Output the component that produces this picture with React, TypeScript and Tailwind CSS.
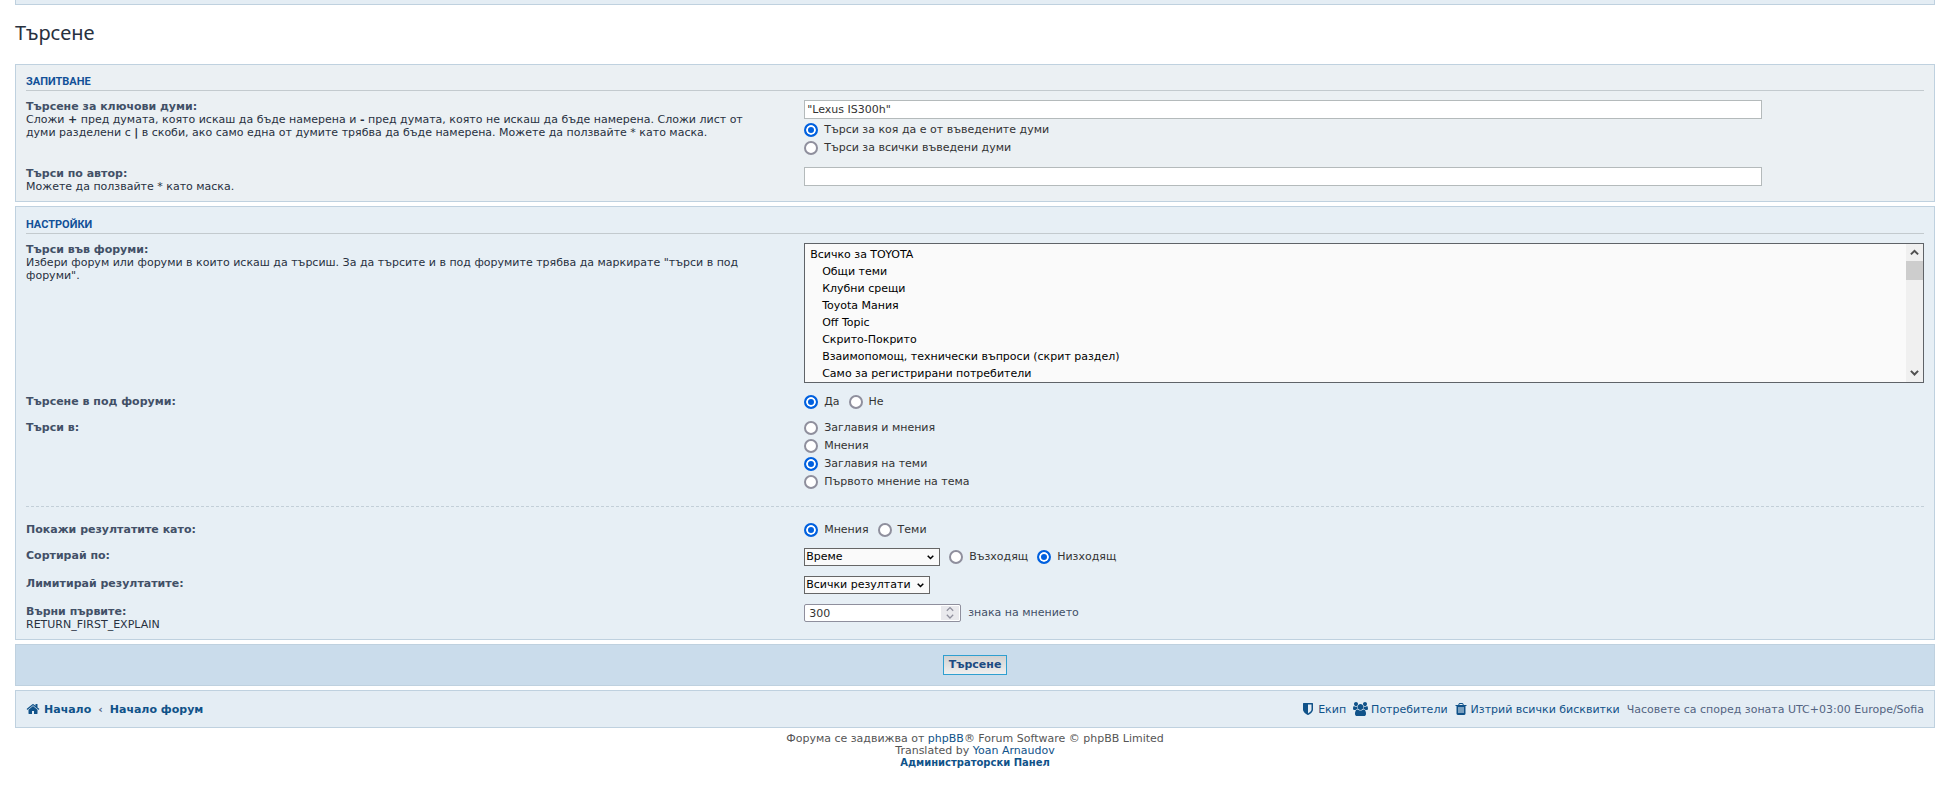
import React, { useState } from "react";

const forums = [
  { id: "1", name: "Всичко за TOYOTA", nested: false },
  { id: "2", name: "Общи теми", nested: true },
  { id: "3", name: "Клубни срещи", nested: true },
  { id: "4", name: "Toyota Мания", nested: true },
  { id: "5", name: "Off Topic", nested: true },
  { id: "6", name: "Скрито-Покрито", nested: true },
  { id: "7", name: "Взаимопомощ, технически въпроси (скрит раздел)", nested: true },
  { id: "8", name: "Само за регистрирани потребители", nested: true },
];

const icons = {
  home: {
    box: "0 0 1792 1792",
    d: "M1472 992v480q0 26-19 45t-45 19h-384v-384h-256v384h-384q-26 0-45-19t-19-45v-480q0-1 .5-3t.5-3l575-474 575 474q1 2 1 6zm223-69l-62 74q-8 9-21 11h-3q-13 0-21-7l-692-577-692 577q-12 8-24 7-13-2-21-11l-62-74q-8-10-7-23.5t11-21.5l719-599q32-26 76-26t76 26l244 204v-195q0-14 9-23t23-9h192q14 0 23 9t9 23v408l219 182q10 8 11 21.5t-7 23.5z",
  },
  shield: {
    box: "256 0 1280 1792",
    d: "M1344 960v-640h-448v1137q119-63 213-137 235-184 235-360zm192-768v768q0 86-33.5 170.5t-83 150-118 127.5-126.5 103-121 77.5-89.5 49.5-42.5 20q-12 6-26 6t-26-6q-16-7-42.5-20t-89.5-49.5-121-77.5-126.5-103-118-127.5-83-150-33.5-170.5v-768q0-26 19-45t45-19h1152q26 0 45 19t19 45z",
  },
  group: {
    box: "-64 0 1920 1792",
    d: "M529 896q-162 5-265 128h-134q-82 0-138-40.5t-56-118.5q0-353 124-353 6 0 43.5 21t97.5 42.5 119 21.5q67 0 133-23-5 37-5 66 0 139 81 256zm1071 637q0 120-73 189.5t-194 69.5h-874q-121 0-194-69.5t-73-189.5q0-53 3.5-103.5t14-109 26.5-108.5 43-97.5 62-81 85.5-53.5 111.5-20q10 0 43 21.5t73 48 107 48 135 21.5 135-21.5 107-48 73-48 43-21.5q61 0 111.5 20t85.5 53.5 62 81 43 97.5 26.5 108.5 14 109 3.5 103.5zm-1024-1277q0 106-75 181t-181 75-181-75-75-181 75-181 181-75 181 75 75 181zm704 384q0 159-112.5 271.5t-271.5 112.5-271.5-112.5-112.5-271.5 112.5-271.5 271.5-112.5 271.5 112.5 112.5 271.5zm576 225q0 78-56 118.5t-138 40.5h-134q-103-123-265-128 81-117 81-256 0-29-5-66 66 23 133 23 59 0 119-21.5t97.5-42.5 43.5-21q124 0 124 353zm-128-609q0 106-75 181t-181 75-181-75-75-181 75-181 181-75 181 75 75 181z",
  },
  trash: {
    box: "192 0 1408 1792",
    d: "M704 1376v-704q0-14-9-23t-23-9h-64q-14 0-23 9t-9 23v704q0 14 9 23t23 9h64q14 0 23-9t9-23zm256 0v-704q0-14-9-23t-23-9h-64q-14 0-23 9t-9 23v704q0 14 9 23t23 9h64q14 0 23-9t9-23zm256 0v-704q0-14-9-23t-23-9h-64q-14 0-23 9t-9 23v704q0 14 9 23t23 9h64q14 0 23-9t9-23zm-544-992h448l-48-117q-7-9-17-11h-317q-10 2-17 11zm928 32v64q0 14-9 23t-23 9h-96v948q0 83-47 143.5t-113 60.5h-832q-66 0-113-58.5t-47-141.5v-952h-96q-14 0-23-9t-9-23v-64q0-14 9-23t23-9h309l70-167q15-37 54-63t79-26h320q40 0 79 26t54 63l70 167h309q14 0 23 9t9 23z",
  },
};

const Icon = ({ name, className }: { name: keyof typeof icons; className: string }) => (
  <svg viewBox={icons[name].box} className={`shrink-0 fill-current ${className}`} aria-hidden="true">
    <path d={icons[name].d} />
  </svg>
);

interface ChevronProps {
  up?: boolean;
  thin?: boolean;
  className: string;
}

const Chevron = ({ up = false, thin = false, className }: ChevronProps) => (
  <svg viewBox="0 0 10 7" className={`fill-none stroke-current ${className}`} aria-hidden="true">
    <path d={up ? "M1 6l4-4 4 4" : "M1 1l4 4 4-4"} strokeWidth={thin ? "1.6" : "2.2"} />
  </svg>
);

interface RadioProps {
  name: string;
  label: string;
  defaultChecked?: boolean;
}

const Radio = ({ name, label, defaultChecked }: RadioProps) => (
  <label className="flex h-[18px] items-center gap-[6px] whitespace-nowrap text-[#333333]">
    <input
      type="radio"
      name={name}
      defaultChecked={defaultChecked}
      className="size-3.5 shrink-0 appearance-none rounded-full border-2 border-[#8f8f9d] bg-white checked:border-[#0060df] checked:bg-[#0060df] checked:shadow-[inset_0_0_0_2px_white]"
    />
    <span className="pb-[2px]">{label}</span>
  </label>
);

const Legend = ({ children }: { children: React.ReactNode }) => (
  <h3 className="mb-[7px] border-b border-[#c3cace] pb-px font-['Roboto',sans-serif] text-[11px] leading-[14px] font-bold text-[#115098] uppercase">
    {children}
  </h3>
);

interface RowProps {
  title: string;
  htmlFor?: string;
  help?: React.ReactNode;
  children: React.ReactNode;
}

const Row = ({ title, htmlFor, help, children }: RowProps) => (
  <div className="grid grid-cols-[41%_1fr]">
    <div className="pt-[2px] pr-8">
      {htmlFor ? (
        <label htmlFor={htmlFor} className="block font-bold text-[#425067]">
          {title}
        </label>
      ) : (
        <p className="font-bold text-[#425067]">{title}</p>
      )}
      {help && <p>{help}</p>}
    </div>
    <div className="min-w-0">{children}</div>
  </div>
);

const Dropdown = ({ id, options, className }: { id: string; options: string[]; className: string }) => (
  <div className={`relative ${className}`}>
    <select
      id={id}
      className="block h-[18px] w-full appearance-none border border-[#666666] bg-[#fafafa] pl-px text-[11px] leading-[16px] text-black"
    >
      {options.map((option) => (
        <option key={option}>{option}</option>
      ))}
    </select>
    <Chevron className="pointer-events-none absolute top-[7px] right-[6px] w-[7px] text-black" />
  </div>
);

const inputClass =
  "block h-[19px] w-[calc(85%+6px)] border border-[#b4babb] bg-white px-[2px] text-[11px] text-[#333333]";

const App = () => {
  const [keywords, setKeywords] = useState('"Lexus IS300h"');
  const [chars, setChars] = useState(300);

  return (
    <div className="min-h-screen bg-white pr-[9px] pl-[15px] font-['DejaVu_Sans',Verdana,sans-serif] text-[11px] leading-[13px] text-[#28313f]">
      {/* Bottom of the header navigation */}
      <div className="h-[5px] border border-t-0 border-[#bfd1df] bg-[#e4edf4]" />

      <h2 className="pt-[14px] pb-[17px] font-['Noto_Sans',sans-serif] text-[20px] leading-7 text-[#28313f]">
        Търсене
      </h2>

      <form onSubmit={(e) => e.preventDefault()}>
        {/* Query */}
        <section className="mb-1 border border-[#bfd1df] bg-[#ebf0f3] px-[10px] pt-[10px] pb-2">
          <Legend>Запитване</Legend>
          <div className="flex flex-col gap-2">
            <Row
              title="Търсене за ключови думи:"
              htmlFor="keywords"
              help={
                <>
                  Сложи <strong>+</strong> пред думата, която искаш да бъде намерена и <strong>-</strong> пред
                  думата, която не искаш да бъде намерена. Сложи лист от думи разделени с <strong>|</strong> в
                  скоби, ако само една от думите трябва да бъде намерена. Можете да ползвайте * като маска.
                </>
              }
            >
              <div className="pt-[2px]">
                <input
                  id="keywords"
                  type="text"
                  value={keywords}
                  onChange={(e) => setKeywords(e.target.value)}
                  className={inputClass}
                />
                <div className="flex flex-col pt-[2px]">
                  <Radio name="terms" label="Търси за коя да е от въведените думи" defaultChecked />
                  <Radio name="terms" label="Търси за всички въведени думи" />
                </div>
              </div>
            </Row>
            <Row title="Търси по автор:" htmlFor="author" help="Можете да ползвайте * като маска.">
              <div className="pt-[2px]">
                <input id="author" type="text" className={inputClass} />
              </div>
            </Row>
          </div>
        </section>

        {/* Options */}
        <section className="mb-1 border border-[#bfd1df] bg-[#e7eff5] px-[10px] pt-[11px] pb-2">
          <Legend>Настройки</Legend>
          <div className="flex flex-col gap-2">
            <Row
              title="Търси във форуми:"
              htmlFor="forums"
              help={'Избери форум или форуми в които искаш да търсиш. За да търсите и в под форумите трябва да маркирате "търси в под форуми".'}
            >
              <div className="relative my-[2px] border border-[#5f6368] bg-[#fafafa]">
                <select
                  id="forums"
                  multiple
                  size={8}
                  className="block h-[138px] w-full appearance-none overflow-y-auto bg-transparent pt-[2px] text-[11px] leading-[13px] text-black [scrollbar-width:none]"
                >
                  {forums.map((forum) => (
                    <option
                      key={forum.id}
                      value={forum.id}
                      className={forum.nested ? "h-[17px] py-[2px] pr-5 pl-[17px]" : "h-[17px] py-[2px] pr-5 pl-[5px]"}
                    >
                      {forum.name}
                    </option>
                  ))}
                </select>
                {/* Scrollbar */}
                <div className="pointer-events-none absolute inset-y-0 right-0 flex w-[17px] flex-col items-center bg-[#f0f0f0] text-[#505050]">
                  <div className="flex h-[17px] items-center">
                    <Chevron up className="w-[9px]" />
                  </div>
                  <div className="h-[19px] w-full bg-[#cdcdcd]" />
                  <div className="mt-auto flex h-[17px] items-center">
                    <Chevron className="w-[9px]" />
                  </div>
                </div>
              </div>
            </Row>
            <Row title="Търсене в под форуми:">
              <div className="flex gap-[9px]">
                <Radio name="subforums" label="Да" defaultChecked />
                <Radio name="subforums" label="Не" />
              </div>
            </Row>
            <Row title="Търси в:">
              <Radio name="fields" label="Заглавия и мнения" />
              <Radio name="fields" label="Мнения" />
              <Radio name="fields" label="Заглавия на теми" defaultChecked />
              <Radio name="fields" label="Първото мнение на тема" />
            </Row>
            <hr className="mt-[7px] mb-[6px] border-t border-dashed border-[#c3cfd8]" />
            <Row title="Покажи резултатите като:">
              <div className="flex gap-[9px]">
                <Radio name="results" label="Мнения" defaultChecked />
                <Radio name="results" label="Теми" />
              </div>
            </Row>
            <Row title="Сортирай по:" htmlFor="sort">
              <div className="flex h-5 items-center gap-[9px]">
                <Dropdown id="sort" options={["Време", "Автор", "Форум", "Заглавие"]} className="w-[136px]" />
                <Radio name="direction" label="Възходящ" />
                <Radio name="direction" label="Низходящ" defaultChecked />
              </div>
            </Row>
            <Row title="Лимитирай резултатите:" htmlFor="limit">
              <div className="flex h-5 items-center">
                <Dropdown id="limit" options={["Всички резултати", "1 ден", "7 дни"]} className="w-[126px]" />
              </div>
            </Row>
            <Row title="Върни първите:" htmlFor="chars" help="RETURN_FIRST_EXPLAIN">
              <div className="flex h-5 items-center gap-[7px]">
                <div className="relative w-[157px]">
                  <input
                    id="chars"
                    type="number"
                    value={chars}
                    onChange={(e) => setChars(Number(e.target.value))}
                    className="block h-[18px] w-full appearance-none rounded-[2px] border border-[#8f8f9d] bg-white pl-1 text-[11px] text-[#333333] [-moz-appearance:textfield] [&::-webkit-inner-spin-button]:appearance-none"
                  />
                  <div className="pointer-events-none absolute inset-y-[2px] right-[2px] flex w-[18px] flex-col items-center justify-center gap-[2px] bg-[#e9e9ed] text-[#8f8f9d]">
                    <Chevron up thin className="w-[8px]" />
                    <Chevron thin className="w-[8px]" />
                  </div>
                </div>
                <label htmlFor="chars" className="pb-[2px] text-[#425067]">
                  знака на мнението
                </label>
              </div>
            </Row>
          </div>
        </section>

        {/* Submit */}
        <div className="mb-1 flex justify-center border border-[#bfd1df] bg-[#cadceb] py-[10px]">
          <button
            type="submit"
            className="h-5 border border-[#2f9fd0] bg-linear-to-b from-[#d2d2d2] to-[#efefef] px-[5px] text-[11px] leading-[18px] font-bold text-[#1c4a82]"
          >
            Търсене
          </button>
        </div>
      </form>

      {/* Footer navigation */}
      <nav className="flex h-[38px] items-center justify-between border border-[#bfd1df] bg-[#e4edf4] px-[10px] text-[#536482]">
        <div className="flex items-center gap-[7px] font-bold">
          <a href="#" className="flex items-center gap-1 text-[#105289]">
            <Icon name="home" className="size-[14px]" />
            Начало
          </a>
          <span>‹</span>
          <a href="#" className="text-[#105289]">
            Начало форум
          </a>
        </div>
        <div className="flex items-center gap-[7px] whitespace-nowrap">
          <a href="#" className="flex items-center gap-1 text-[#105289]">
            <Icon name="shield" className="h-[14px] w-3" />
            Екип
          </a>
          <a href="#" className="flex items-center gap-[3px] text-[#105289]">
            <Icon name="group" className="h-[14px] w-[15px]" />
            Потребители
          </a>
          <a href="#" className="flex items-center gap-1 text-[#105289]">
            <Icon name="trash" className="h-[14px] w-3" />
            Изтрий всички бисквитки
          </a>
          <span>Часовете са според зоната UTC+03:00 Europe/Sofia</span>
        </div>
      </nav>

      <footer className="pt-[5px] text-center leading-3 text-[#555555]">
        <p>
          Форума се задвижва от{" "}
          <a href="#" className="text-[#105289]">
            phpBB
          </a>
          ® Forum Software © phpBB Limited
        </p>
        <p>
          Translated by{" "}
          <a href="#" className="text-[#105289]">
            Yoan Arnaudov
          </a>
        </p>
        <p className="text-[10px] leading-3">
          <a href="#" className="font-bold text-[#105289]">
            Администраторски Панел
          </a>
        </p>
      </footer>
    </div>
  );
};

export default App;
